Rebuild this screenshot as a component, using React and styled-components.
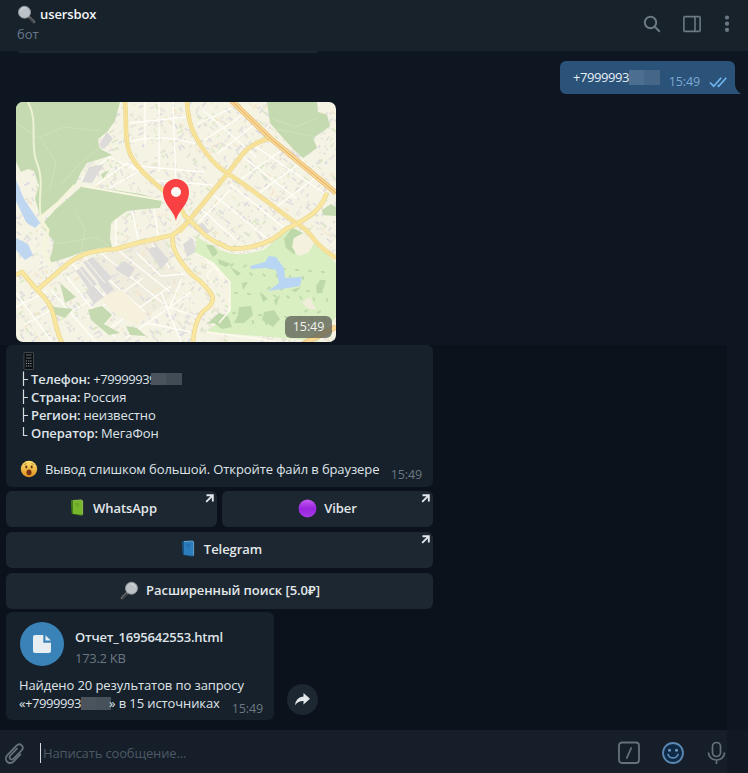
import React from "react";
import styled, { createGlobalStyle } from "styled-components";

const Global = createGlobalStyle`
  * { box-sizing: border-box; }
  body { margin: 0; background: #0e1621; overflow: hidden; }
  svg { display: block; flex: none; }
`;

const Window = styled.div`
  width: 748px;
  height: 773px;
  display: flex;
  flex-direction: column;
  font-family: "Open Sans", "Noto Sans", sans-serif;
  font-size: 13px;
  line-height: 18px;
  letter-spacing: -0.1px;
  color: #dfe4e8;
  overflow: hidden;
  white-space: nowrap;
`;

const Header = styled.header`
  height: 51px;
  flex: none;
  display: flex;
  justify-content: space-between;
  padding: 0 13px 0 17px;
  background: #18222b;
`;

const Peer = styled.div`
  display: flex;
  flex-direction: column;
  padding-top: 4px;
`;

const PeerName = styled.div`
  display: flex;
  align-items: center;
  gap: 4px;
  height: 20px;
  font-weight: 600;
  font-size: 13px;
  color: #f3f6f8;
`;

const PeerStatus = styled.div`
  height: 20px;
  line-height: 20px;
  letter-spacing: 0;
  color: #66798a;
`;

const HeaderTools = styled.div`
  display: flex;
  align-items: center;
  gap: 22px;
  height: 48px;
  color: #6c7883;
`;

const Chat = styled.main`
  flex: 1;
  min-height: 0;
  display: flex;
  flex-direction: column;
  background: linear-gradient(#0b121b, #0b121b) 0 294px / 727px 400px no-repeat, #0e1621;
`;

const PreviousEdge = styled.div`
  width: 300px;
  height: 2px;
  margin-left: 18px;
  flex: none;
  background: #1b2630;
  border-radius: 0 0 4px 4px;
`;

const OutRow = styled.div`
  display: flex;
  justify-content: flex-end;
  align-items: flex-end;
  margin-top: 8px;
  padding-right: 13px;
`;

const OutBubble = styled.div`
  display: flex;
  width: 175px;
  height: 33px;
  justify-content: space-between;
  padding: 7px 8px 0 13px;
  background: #2b5278;
  border-radius: 6px 6px 0 6px;
  color: #e6eef5;
`;

const Tail = styled.svg`
  width: 6px;
  height: 9px;
  margin-right: -6px;
`;

const Digits = styled.span`
  letter-spacing: -0.43px;
`;

const Censor = styled.span`
  display: inline-block;
  vertical-align: ${(p) => p.$shift || "-2px"};
  width: ${(p) => p.$w}px;
  height: ${(p) => p.$h || 13}px;
  margin-left: ${(p) => p.$ml || 0}px;
  margin-right: ${(p) => p.$mr || 0}px;
  background: linear-gradient(90deg, ${(p) => p.$from} 50%, ${(p) => p.$to} 50%);
`;

const Stamp = styled.span`
  color: ${(p) => (p.$out ? "#7da8d3" : "#6b7883")};
  font-size: 12.5px;
  line-height: 16px;
`;

const OutMeta = styled.div`
  display: flex;
  align-items: center;
  gap: 9px;
  margin-top: 6px;
  height: 16px;
`;

const MapCard = styled.div`
  display: grid;
  width: 320px;
  height: 240px;
  flex: none;
  margin: 8px 0 0 16px;
  border-radius: 7px;
  overflow: hidden;
  & > * { grid-area: 1 / 1; }
`;

const MapStamp = styled.div`
  align-self: end;
  justify-self: end;
  z-index: 1;
  width: 47px;
  height: 22px;
  margin: 0 4px 4px 0;
  border-radius: 6px;
  background: rgba(92, 95, 86, 0.76);
  color: #f2f3f0;
  font-size: 12.5px;
  line-height: 22px;
  text-align: center;
`;

const Message = styled.section`
  display: flex;
  flex-direction: column;
  width: ${(p) => p.$w}px;
  height: ${(p) => p.$h}px;
  flex: none;
  padding: 7px 11px 0 13px;
  background: #17212b;
  border-radius: 6px;
`;

const Reply = styled(Message)`
  margin: 3px 0 0 6px;
`;

const Line = styled.div`
  display: flex;
  align-items: ${(p) => (p.$center ? "center" : "baseline")};
  height: 18px;
  flex: none;
`;

const Field = styled.b`
  font-weight: 600;
  margin-right: 3px;
`;

const Branch = styled.svg`
  width: 9px;
  height: 18px;
  align-self: center;
  margin-right: 3px;
`;

const Notice = styled.div`
  display: flex;
  align-items: center;
  justify-content: space-between;
  height: 18px;
  margin-top: 18px;
  ${Stamp} { margin-top: 11px; }
`;

const WithIcon = styled.div`
  display: flex;
  align-items: center;
  gap: 7px;
`;

const Keyboard = styled.div`
  display: grid;
  grid-template-columns: 1fr 1fr;
  grid-auto-rows: 36px;
  gap: 5px;
  width: 427px;
  margin: 4px 0 0 6px;
`;

const Key = styled.div`
  grid-column: ${(p) => (p.$wide ? "1 / 3" : "auto")};
  position: relative;
  display: flex;
  align-items: center;
  justify-content: center;
  gap: ${(p) => p.$gap || 7}px;
  padding: 0 0 2px ${(p) => p.$pl || 0}px;
  background: #1c2731;
  border-radius: 6px;
  font-weight: 600;
  letter-spacing: -0.05px;
  color: #e3e7ea;
`;

const LinkArrow = styled.svg`
  position: absolute;
  top: 3px;
  right: 3px;
  width: 9px;
  height: 9px;
`;

const FileRow = styled.div`
  display: flex;
  align-items: flex-end;
  gap: 13px;
  margin: 3px 0 0 6px;
`;

const FileHead = styled.div`
  display: flex;
  align-items: center;
  gap: 11px;
  height: 44px;
  margin: 3px 0 10px 1px;
`;

const FileInfo = styled.div`
  display: flex;
  flex-direction: column;
  gap: 3px;
  padding-top: 6px;
`;

const FileName = styled.div`
  font-weight: 600;
  letter-spacing: -0.2px;
`;

const FileSize = styled.div`
  color: #6b7883;
  letter-spacing: -0.3px;
`;

const Disc = styled.div`
  display: grid;
  place-items: center;
  width: ${(p) => p.$size}px;
  height: ${(p) => p.$size}px;
  flex: none;
  border-radius: 50%;
  background: ${(p) => p.$bg};
  margin-bottom: ${(p) => p.$mb || 0}px;
`;

const LastLine = styled(Line)`
  justify-content: space-between;
  ${Stamp} { position: relative; top: 5px; }
`;

const Composer = styled.footer`
  display: flex;
  align-items: center;
  width: 727px;
  height: 43px;
  flex: none;
  padding: 4px 0 0 4px;
  background: #161f29;
`;

const Bottom = styled.div`
  flex: none;
  background: #101924;
`;

const Input = styled.div`
  flex: 1;
  height: 20px;
  line-height: 18px;
  margin: -1px 0 0 15px;
  border-left: 1px solid #d5dade;
  padding: 1px 0 0 2px;
  letter-spacing: -0.15px;
  color: #4b5965;
`;

const ComposerTools = styled.div`
  display: flex;
  align-items: center;
  gap: 20px;
  margin-top: -1px;
`;

function Magnifier({ flip }) {
  return (
    <svg width="19" height="19" viewBox="0 0 19 19">
      <g transform={flip ? "translate(19 0) scale(-1 1)" : undefined}>
        <path d="M11 11l6 6" stroke="#747576" strokeWidth="2.5" strokeLinecap="round" />
        <path d="M12.5 13l4 4" stroke="#3d3f42" strokeWidth="1.5" strokeLinecap="round" />
        <circle cx="7.5" cy="7.2" r="6" fill="#bcc3c8" stroke="#909598" strokeWidth="1" />
        <path d="M3.5 6a4.4 4.4 0 0 1 5-3" stroke="#dce1e4" strokeWidth="1" fill="none" />
      </g>
    </svg>
  );
}

function Book({ light, main, dark }) {
  return (
    <svg width="14" height="18" viewBox="0 0 14 18">
      <path d="M1 1.2L11.5 .6 13 2v13.8l-1.4.9L2 15z" fill={dark} />
      <path d="M3 2l9-.3v14L3 14.8z" fill={main} />
      <path d="M1 1.3L3 2v13.2l-1.3-.6z" fill={dark} />
      <path d="M3 1.5l8.8-.4.8 1v13.5" fill="none" stroke={light} strokeWidth=".7" />
      <path d="M5.5 5h3.5M6.5 7h2" stroke={dark} strokeWidth=".9" opacity=".65" />
    </svg>
  );
}

function Arrow() {
  return (
    <LinkArrow viewBox="0 0 9 9">
      <path d="M1.5 1.2H7.8V7.5M7.2 1.8L1.2 7.8" fill="none" stroke="#e2e7eb" strokeWidth="1.9" />
    </LinkArrow>
  );
}

function Tree({ end }) {
  return (
    <Branch viewBox="0 0 9 18">
      <path d={end ? "M4.5 3v8.5H8.5" : "M4.5 1.5v14.5M4.5 9.5H9"} fill="none" stroke="#d5dbe0" strokeWidth="1.2" />
    </Branch>
  );
}

function buildCity() {
  let seed = 41;
  const rnd = () => {
    seed = (seed * 16807) % 2147483647;
    return seed / 2147483647;
  };
  const items = [];
  const tones = ["#e0dddd", "#e6e2de", "#dedbe1", "#e9e5dc", "#e1dedc", "#dbe8c7", "#f4e7cc"];
  for (let i = 0; i < 1800; i++) {
    const x = rnd() * 320;
    const y = rnd() * 240;
    const base = x < 165 && y < 110 ? -28 : y > 145 && x < 165 ? -32 : 38;
    const turn = base + (rnd() > 0.5 ? 90 : 0);
    items.push({
      x, y, turn,
      w: 2 + rnd() * 4.5,
      h: 1 + rnd() * 1.1,
      tone: tones[Math.floor(rnd() * tones.length)],
    });
  }
  return items;
}

const city = buildCity();

const woods = [
  "M0 0H104L99 19 91 30 82 37 83 45 86 48 96 53 84 57 71 61 65 70 59 83 42 101 24 114 19 96 23 84 18 69 12 67 5 70 0 60Z",
  "M66 84L98 88 125 92 146 98 144 106 128 107 111 109 101 116 95 121 94 137 96 145 84 146 66 150 53 155 41 159 32 161 36 150 38 139 30 130 27 121 40 107Z",
  "M251 0L254 21 268 37 279 49 287 56 301 46 297 36 309 28 314 24 311 13 302 10 301 0Z",
];

const yellowRoads = [
  "M109 -1C111 20 108 35 113 49S129 73 147 88L168 111",
  "M171 -1C172 20 176 32 190 51S214 71 237 89L277 119Q291 127 297 136T320 156",
  "M163 130L171 121 212 71 225 54Q234 42 254 36",
  "M311 91Q305 108 289 117T270 127Q256 141 234 145T207 143Q194 139 183 127L167 112",
  "M0 173L6 170 21 188Q35 200 38 215T46 241",
  "M21 188L41 171Q60 153 76 150T100 147L121 141 157 133 171 121",
  "M157 133Q155 145 164 158T180 176 194 190 190 207 177 240",
];

function CityMap() {
  return (
    <svg width="320" height="240" viewBox="0 0 320 240">
      <rect width="320" height="240" fill="#f5f3e4" />
      <path d="M67 160L115 142 152 138 156 165 170 176 145 205 128 216 90 193Z" fill="#f0eddf" />
      {city.map((b, i) => (
        <rect key={i} width={b.w} height={b.h} fill={b.tone} transform={`translate(${b.x} ${b.y}) rotate(${b.turn})`} />
      ))}
      <g stroke="#fffef8" strokeWidth="1.3" fill="none">
        <path d="M114 21L170 15M114 40Q145 31 180 42M121 64L188 70M133 78L196 83M129 0V45M143 0V70M157 0L160 84M186 7L240 55M181 22L216 6M188 38L232 10M201 52L239 22M221 80L266 48M240 93L288 58M256 108L303 73M215 72L258 105M226 54L281 97M236 42L311 93M183 105L221 139M198 93L254 139M214 82L277 133M181 122L215 87" />
        <path d="M54 160L113 219M69 156L129 210M85 151L148 202M103 149L154 190M51 175L99 235M35 188L80 240M48 213L91 190M71 215L127 176M91 228L155 184M110 236L175 190M120 150L145 174 169 172M136 142L154 166M148 204L185 216M130 221L175 230M145 190L165 240M166 176L154 205" />
        <path d="M0 191L36 240M0 205L31 189M8 223L37 207M66 77L93 55 122 69M80 83L111 61 145 82M93 86L123 69M100 109V143M116 108L122 137M138 106L142 134" />
      </g>
      <path d="M84 197L105 187 132 215 117 222 99 212Z" fill="#f5f1dd" />
      <g fill="#dddada">
        <path d="M67 160L77 155 96 176 85 183ZM60 169L66 164 81 182 73 188ZM99 167L108 159 119 166 113 176ZM132 148L141 144 153 158 145 167ZM70 190L78 184 88 195 78 202ZM82 181L89 176 98 187 91 193ZM167 142L176 136 181 149 171 155ZM177 126L187 121 194 130 187 134ZM66 80L73 65 88 62 76 81ZM83 43L91 30 97 37 88 47Z" />
        <path d="M70 158L89 181M63 166L77 184" stroke="#eeece3" strokeWidth="1.5" />
      </g>
      <g fill="#c5dab0">
        {woods.map((d) => <path key={d} d={d} />)}
        <path d="M27 191L38 205 57 207 49 216 35 211ZM44 181L60 195 49 201ZM72 208L86 204 96 213 88 222 104 231 93 233 75 218ZM110 224L121 226 130 234 114 233ZM85 72L93 68 87 77ZM306 108L315 102 320 105V114L307 113Z" />
      </g>
      <path d="M0 21L22 36 48 25 85 29M24 36L40 60 34 86M45 82L66 60 83 46M40 142L80 135 93 144M58 108L69 127 65 150M257 17L279 25 302 16M261 27L295 34" stroke="#d0e1bd" strokeWidth="1" fill="none" />
      <path d="M12 0C23 20 13 42 21 61S21 96 25 115" stroke="#edf2d5" strokeWidth="2" fill="none" />
      <path d="M59 83L42 101 24 116 32 128 28 149 35 163" stroke="#f6f5dc" strokeWidth="3" fill="none" />
      <path d="M66 84L146 98" stroke="#f9f7e3" strokeWidth="2" />
      <path d="M181 135L204 148Q225 157 249 147L276 124 297 138 320 161V215L302 239 190 230 204 220 214 209V181L197 162 179 151Z" fill="#d9efc2" />
      <g fill="#bdd8a9">
        <path d="M268 137L276 126 289 132 277 137 279 153 270 146ZM190 143L197 143 202 151 197 155ZM202 157L215 162 210 165 203 162ZM214 165L225 171 221 174ZM275 188L285 185 280 190ZM304 178L310 178 307 188 301 192 300 184ZM223 205L235 204 237 213 228 221 218 221 222 213ZM191 222L203 211 212 214 216 225 206 227 198 221ZM248 210L258 208 264 217 257 225 246 218ZM244 190L252 197 247 200ZM226 181L232 180 227 188ZM258 198L264 193 260 204Z" />
        {Array.from({ length: 40 }, (_, i) => (
          <ellipse key={i} cx={216 + ((i * 37) % 98)} cy={163 + ((i * 23) % 68)} rx="2.2" ry="1" transform={`rotate(${i * 3 - 40} ${216 + ((i * 37) % 98)} ${163 + ((i * 23) % 68)})`} />
        ))}
      </g>
      <path d="M278 136L287 131 299 140 292 151 282 154 276 145Z" fill="#f5f1df" />
      <path d="M286 200L294 195 300 208 291 206Z" fill="#f0eedb" />
      <path d="M234 164L249 160 253 154 260 155 268 166 269 176 286 175 284 184 272 186 252 189 263 181 260 168 250 166 235 167Z" fill="#b8d5f3" />
      <path d="M0 78L8 97 24 121 19 126 10 120 0 99ZM0 136L12 142 17 153 9 158 0 148Z" fill="#bed6f0" />
      <path d="M179 151L197 161 214 180V208L203 221M198 167Q186 171 196 181M190 159Q202 165 207 178M190 230L237 236 267 241" fill="none" stroke="#fffbed" strokeWidth="1.4" />
      <g fill="none" strokeLinejoin="round">
        {yellowRoads.map((d) => <path key={d} d={d} stroke="#e9d48b" strokeWidth="4.6" />)}
        {yellowRoads.map((d) => <path key={d} d={d} stroke="#fae79f" strokeWidth="3.4" />)}
        {yellowRoads.slice(0, 3).map((d) => <path key={d} d={d} stroke="#eed386" strokeWidth=".7" />)}
        <path d="M215 -2L254 36 320 91M287 242L320 225" stroke="#e9bd76" strokeWidth="5.5" />
        <path d="M215 -2L254 36 320 91M287 242L320 225" stroke="#f9d993" strokeWidth="4" />
        <path d="M215 -2L254 36 320 91" stroke="#dfa868" strokeWidth="1" />
      </g>
      <path d="M160 119C158 108 147 103 147 90a13 13 0 0 1 26 0c0 13-11 18-13 29Z" fill="#f94144" />
      <circle cx="160" cy="90" r="5" fill="#fffaf5" />
    </svg>
  );
}

export default function App() {
  return (
    <>
      <Global />
      <Window>
        <Header>
          <Peer>
            <PeerName><Magnifier />usersbox</PeerName>
            <PeerStatus>бот</PeerStatus>
          </Peer>
          <HeaderTools>
            <svg width="18" height="18" viewBox="0 0 18 18" fill="none" stroke="currentColor" strokeWidth="2">
              <circle cx="7.5" cy="7.5" r="5.7" /><path d="M11.8 11.8l5 5" />
            </svg>
            <svg width="18" height="18" viewBox="0 0 18 18" fill="none" stroke="currentColor" strokeWidth="1.6">
              <rect x=".9" y="1.6" width="16.2" height="14.8" rx="1" /><path d="M12 2v14" />
            </svg>
            <svg width="12" height="18" viewBox="0 0 12 18" fill="currentColor">
              <circle cx="4" cy="2.5" r="2.1" /><circle cx="4" cy="8.7" r="2.1" /><circle cx="4" cy="14.9" r="2.1" />
            </svg>
          </HeaderTools>
        </Header>

        <Chat>
          <PreviousEdge />
          <OutRow>
            <OutBubble>
              <Digits>+7999993<Censor $w={31} $h={15} $shift="-3px" $from="#4d6f8f" $to="#456687" /></Digits>
              <OutMeta>
                <Stamp $out>15:49</Stamp>
                <svg width="18" height="12" viewBox="0 0 18 12" fill="none" stroke="#70b5ed" strokeWidth="1.7">
                  <path d="M1 6.5l3.7 3.7 7.5-8.5M8.7 9.2l1 1L17.3 1.7" />
                </svg>
              </OutMeta>
            </OutBubble>
            <Tail viewBox="0 0 6 9"><path d="M0 0q1 6 6 9H0z" fill="#2b5278" /></Tail>
          </OutRow>

          <MapCard>
            <CityMap />
            <MapStamp>15:49</MapStamp>
          </MapCard>

          <Reply $w={427} $h={142}>
            <Line $center>
              <svg width="18" height="18" viewBox="0 0 18 18">
                <rect x="5" y=".5" width="9.5" height="17" rx=".8" fill="#090e12" stroke="#555b5f" strokeWidth=".7" />
                <path d="M7 3h5.5M7 6h5.5" stroke="#687177" />
                <path d="M6.8 9h6M6.8 11.5h6M6.8 14h6" stroke="#92989c" strokeWidth="1" strokeDasharray="1.3 .9" />
              </svg>
            </Line>
            <Line><Tree /><Field>Телефон:</Field><Digits>+79999939<Censor $w={31} $h={12} $ml={-5} $shift="-1px" $from="#4b545c" $to="#414c55" /></Digits></Line>
            <Line><Tree /><Field>Страна:</Field>Россия</Line>
            <Line><Tree /><Field>Регион:</Field>неизвестно</Line>
            <Line><Tree end /><Field>Оператор:</Field>МегаФон</Line>
            <Notice>
              <WithIcon>
                <svg width="19" height="18" viewBox="0 0 19 18">
                  <defs>
                    <linearGradient id="face" x2="0" y2="1"><stop stopColor="#ffe173" /><stop offset="1" stopColor="#df901d" /></linearGradient>
                  </defs>
                  <circle cx="10" cy="9" r="8.2" fill="url(#face)" />
                  <ellipse cx="7.3" cy="7" rx="1" ry="1.4" fill="#5b3510" /><ellipse cx="12.7" cy="7" rx="1" ry="1.4" fill="#5b3510" />
                  <path d="M5.4 4.5l2-1M12.5 3.5l2 1" stroke="#9b6319" strokeWidth=".8" />
                  <ellipse cx="10" cy="12.3" rx="2.5" ry="2.9" fill="#793213" />
                </svg>
                Вывод слишком большой. Откройте файл в браузере
              </WithIcon>
              <Stamp>15:49</Stamp>
            </Notice>
          </Reply>

          <Keyboard>
            <Key $gap={9} $pl={4}><Book light="#b4db6b" main="#77b52b" dark="#437b1d" />WhatsApp<Arrow /></Key>
            <Key>
              <svg width="19" height="19" viewBox="0 0 19 19">
                <defs><linearGradient id="violet" x2="0" y2="1"><stop stopColor="#c45cf2" /><stop offset=".5" stopColor="#9925dd" /><stop offset="1" stopColor="#a63ae8" /></linearGradient></defs>
                <circle cx="9.5" cy="9.5" r="9" fill="url(#violet)" />
              </svg>
              Viber<Arrow />
            </Key>
            <Key $wide $gap={9} $pl={4}><Book light="#8fc7ec" main="#2b7dbc" dark="#185484" />Telegram<Arrow /></Key>
            <Key $wide $pl={1}><Magnifier flip />Расширенный поиск [5.0₽]</Key>
          </Keyboard>

          <FileRow>
            <Message $w={268} $h={108}>
              <FileHead>
                <Disc $size={44} $bg="#3a83b8">
                  <svg width="18" height="18" viewBox="0 0 18 18" fill="#e8edf1">
                    <path d="M2 0h8.3v7.7H18V16a2 2 0 0 1-2 2H2a2 2 0 0 1-2-2V2a2 2 0 0 1 2-2z" /><path d="M12.5.2L17.8 5.5h-5.3z" />
                  </svg>
                </Disc>
                <FileInfo><FileName>Отчет_1695642553.html</FileName><FileSize>173.2 KB</FileSize></FileInfo>
              </FileHead>
              <Line>Найдено 20 результатов по запросу</Line>
              <LastLine>
                <span><Digits>«+7999993<Censor $w={30} $h={13} $mr={-2} $shift="-2px" $from="#4b545c" $to="#46515a" /></Digits>» в 15 источниках</span>
                <Stamp>15:49</Stamp>
              </LastLine>
            </Message>
            <Disc $size={31} $bg="#1c2731" $mb={5}>
              <svg width="15" height="13" viewBox="0 0 15 13"><path d="M8.5 0L15 5.8 8.5 11.6V8.1Q3.5 7.8 0 12.2 1 4.2 8.5 3.5z" fill="#e3e7ea" /></svg>
            </Disc>
          </FileRow>
        </Chat>

        <Bottom>
          <Composer>
            <svg width="21" height="23" viewBox="0 0 21 23" fill="none" stroke="#66717a" strokeWidth="1.8" strokeLinecap="round">
              <path d="M16.5 12.3L9.7 19.4c-4.5 4.6-10.8-1.6-6.3-6.2L12.5 3.7c3.7-3.7 8.5 1 5 4.8l-7.9 8.2c-2.3 2.4-5.5-.8-3.2-3.2L13 6.7" />
            </svg>
            <Input>Написать сообщение...</Input>
            <ComposerTools>
              <svg width="24" height="24" viewBox="0 0 24 24" fill="none" stroke="#66717a" strokeWidth="1.8">
                <rect x="2" y="1.5" width="20" height="20.5" rx="3" /><path d="M14.2 7l-4.4 10" strokeLinecap="round" />
              </svg>
              <svg width="24" height="24" viewBox="0 0 24 24" fill="none" stroke="#5b87b1" strokeWidth="1.8">
                <circle cx="12" cy="12" r="10" fill="#0e2a47" /><path d="M7 13.5c1.8 4.6 8.2 4.6 10 0" strokeLinecap="round" />
                <circle cx="8.5" cy="9.3" r="1.5" fill="#7199bc" stroke="none" /><circle cx="15.5" cy="9.3" r="1.5" fill="#7199bc" stroke="none" />
              </svg>
              <svg width="22" height="24" viewBox="0 0 22 24" fill="none" stroke="#66717a" strokeWidth="1.7">
                <rect x="7.5" y="1.5" width="8" height="14" rx="4" /><path d="M3.5 11.5c0 10 16 10 16 0M11.5 19v4" />
              </svg>
            </ComposerTools>
          </Composer>
        </Bottom>
      </Window>
    </>
  );
}
